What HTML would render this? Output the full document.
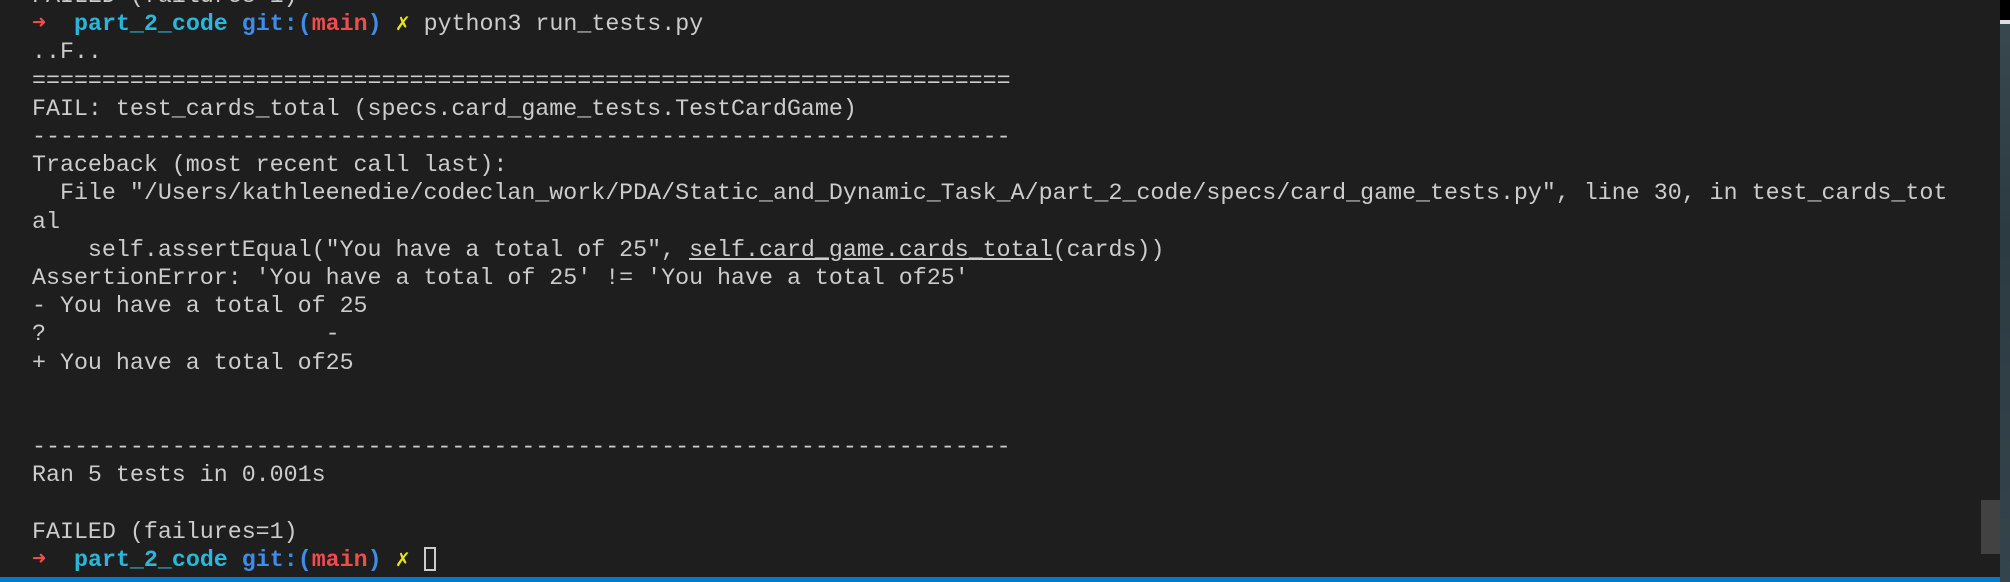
<!DOCTYPE html>
<html><head><meta charset="utf-8"><style>
html,body{margin:0;padding:0;}
body{width:2010px;height:582px;background:#1e1e1e;position:relative;overflow:hidden;}
#t{position:absolute;left:32px;top:-18px;font-family:"Liberation Mono","DejaVu Sans Mono",monospace;font-size:23.3px;line-height:28.2px;color:#cccccc;white-space:pre;}
.r{color:#f14c4c}.c{color:#29b8db;font-weight:bold}.b{color:#3b8eea;font-weight:bold}.y{color:#e5e510}
.rb{color:#f14c4c;font-weight:bold}
.cur{display:inline-block;width:12px;height:24px;border:2px solid #cccccc;vertical-align:-5px;box-sizing:border-box}
#side{position:absolute;left:2000px;top:0;width:10px;height:582px;background:linear-gradient(#3a4850,#2c3a42 40%,#35444c);}
#sideTop{position:absolute;left:2000px;top:0;width:10px;height:20px;background:#000;}
#sideLine{position:absolute;left:2000px;top:20px;width:10px;height:4px;background:#ddd;}
#thumb{position:absolute;left:1981px;top:500px;width:19px;height:54px;background:#424242;}
#bar{position:absolute;left:0;top:577px;width:2000px;height:5px;background:#007acc;}
</style></head><body>
<div id="t">FAILED (failures=1)
<span class="r">➜</span>  <span class="c">part_2_code</span> <span class="b">git:(</span><span class="rb">main</span><span class="b">)</span> <span class="y">✗</span> python3 run_tests.py
..F..
======================================================================
FAIL: test_cards_total (specs.card_game_tests.TestCardGame)
----------------------------------------------------------------------
Traceback (most recent call last):
  File "/Users/kathleenedie/codeclan_work/PDA/Static_and_Dynamic_Task_A/part_2_code/specs/card_game_tests.py", line 30, in test_cards_tot
al
    self.assertEqual("You have a total of 25", <u>self.card_game.cards_total</u>(cards))
AssertionError: 'You have a total of 25' != 'You have a total of25'
- You have a total of 25
?                    -
+ You have a total of25


----------------------------------------------------------------------
Ran 5 tests in 0.001s

FAILED (failures=1)
<span class="r">➜</span>  <span class="c">part_2_code</span> <span class="b">git:(</span><span class="rb">main</span><span class="b">)</span> <span class="y">✗</span> <span class="cur"></span></div>
<div id="side"></div><div id="sideTop"></div><div id="sideLine"></div>
<div id="thumb"></div><div id="bar"></div>
</body></html>
